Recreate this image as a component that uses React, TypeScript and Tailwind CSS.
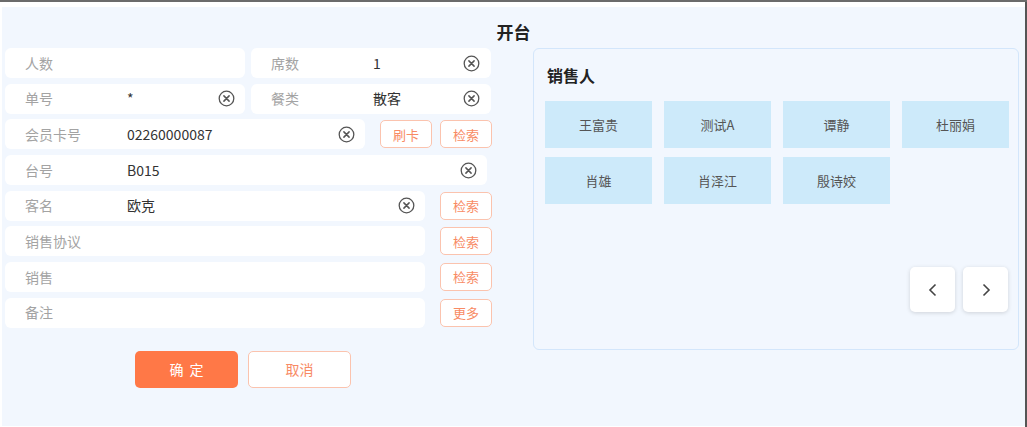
import React from "react";

const font = { fontFamily: '"Noto Sans CJK SC", "Noto Sans", sans-serif' };

function ClearIcon() {
  return (
    <svg width="17" height="17" viewBox="0 0 17 17" className="shrink-0">
      <circle cx="8.5" cy="8.5" r="7.3" fill="none" stroke="#555" strokeWidth="1.3" />
      <path d="M5.9 5.9 L11.1 11.1 M11.1 5.9 L5.9 11.1" stroke="#555" strokeWidth="1.5" strokeLinecap="round" />
    </svg>
  );
}

function Field({
  label,
  value,
  clear,
  w,
  clearPos,
}: {
  label: string;
  value?: string;
  clear?: boolean;
  w: string;
  clearPos?: string;
}) {
  return (
    <div className={`h-[30px] ${w} bg-white rounded-[6px] flex items-center pl-[20px] pr-[10px]`}>
      <span className="w-[102px] shrink-0 text-[14px] text-[#a3a3a3]">{label}</span>
      <span className="flex-1 text-[14px] text-[#333]">{value}</span>
      {clear && (
        <span className={clearPos ?? ""}>
          <ClearIcon />
        </span>
      )}
    </div>
  );
}

function OBtn({ text }: { text: string }) {
  return (
    <div className="h-[28px] w-[52px] shrink-0 rounded-[5px] border border-[#fbc3ae] bg-white flex items-center justify-center text-[13px] text-[#f88a64]">
      {text}
    </div>
  );
}

export default function App() {
  const people = ["王富贵", "测试A", "谭静", "杜丽娟", "肖雄", "肖泽江", "殷诗姣"];
  return (
    <div className="w-[1027px] h-[427px] bg-white border-t-2 border-[#6b6b6b] overflow-hidden" style={font}>
      <div className="flex h-[425px]">
        <div className="w-[1023px] ml-[2px] mt-[5px] h-[419px] bg-[#f2f7fe] flex flex-col">
          <div className="h-[41px] flex items-center justify-center pt-[9px] text-[17px] font-bold text-[#222]">
            开台
          </div>
          <div className="flex">
            {/* left form */}
            <div className="ml-[3px] w-[487px] flex flex-col gap-[5.7px]">
              <div className="flex gap-[6px]">
                <Field label="人数" w="w-[240px]" />
                <Field label="席数" value="1" clear w="w-[240px]" clearPos="mr-[1px]" />
              </div>
              <div className="flex gap-[6px]">
                <Field label="单号" value="*" clear w="w-[240px]" />
                <Field label="餐类" value="散客" clear w="w-[240px]" clearPos="mr-[1px]" />
              </div>
              <div className="flex items-center">
                <Field label="会员卡号" value="02260000087" clear w="w-[360px]" />
                <div className="ml-[15px] flex gap-[8px]">
                  <OBtn text="刷卡" />
                  <OBtn text="检索" />
                </div>
              </div>
              <div className="flex">
                <Field label="台号" value="B015" clear w="w-[482px]" />
              </div>
              <div className="flex items-center">
                <Field label="客名" value="欧克" clear w="w-[420px]" />
                <div className="ml-[15px]">
                  <OBtn text="检索" />
                </div>
              </div>
              <div className="flex items-center">
                <Field label="销售协议" w="w-[420px]" />
                <div className="ml-[15px]">
                  <OBtn text="检索" />
                </div>
              </div>
              <div className="flex items-center">
                <Field label="销售" w="w-[420px]" />
                <div className="ml-[15px]">
                  <OBtn text="检索" />
                </div>
              </div>
              <div className="flex items-center">
                <Field label="备注" w="w-[420px]" />
                <div className="ml-[15px]">
                  <OBtn text="更多" />
                </div>
              </div>
              <div className="flex gap-[10px] ml-[130px] mt-[17px]">
                <div className="w-[103px] h-[37px] rounded-[5px] bg-[#ff7847] flex items-center justify-center text-[14px] text-white tracking-[6px] pl-[6px]">
                  确定
                </div>
                <div className="w-[103px] h-[37px] rounded-[5px] bg-white border border-[#fbc3ae] flex items-center justify-center text-[14px] text-[#f88a64]">
                  取消
                </div>
              </div>
            </div>
            {/* right panel */}
            <div className="ml-[41px] w-[486px] h-[302px] rounded-[6px] border border-[#d3e6fb] flex flex-col pl-[11px]">
              <div className="h-[52px] flex items-center pl-[2px] text-[16px] font-bold text-[#222]">销售人</div>
              <div className="grid grid-cols-[107px_107px_107px_107px] gap-x-[12px] gap-y-[9px]">
                {people.map((p) => (
                  <div
                    key={p}
                    className="h-[47px] bg-[#cdeafa] flex items-center justify-center text-[13px] text-[#555]"
                  >
                    {p}
                  </div>
                ))}
              </div>
              <div className="flex justify-end gap-[8px] mr-[10px] mt-[63px]">
                <div className="w-[45px] h-[45px] rounded-[5px] bg-white shadow-[0_1px_4px_rgba(0,0,0,0.15)] flex items-center justify-center">
                  <svg width="16" height="16" viewBox="0 0 16 16">
                    <path d="M10.5 2.5 L5 8 L10.5 13.5" fill="none" stroke="#444" strokeWidth="1.6" />
                  </svg>
                </div>
                <div className="w-[45px] h-[45px] rounded-[5px] bg-white shadow-[0_1px_4px_rgba(0,0,0,0.15)] flex items-center justify-center">
                  <svg width="16" height="16" viewBox="0 0 16 16">
                    <path d="M5.5 2.5 L11 8 L5.5 13.5" fill="none" stroke="#444" strokeWidth="1.6" />
                  </svg>
                </div>
              </div>
            </div>
          </div>
        </div>
        <div className="w-[2px] h-full bg-[#555]"></div>
      </div>
    </div>
  );
}
